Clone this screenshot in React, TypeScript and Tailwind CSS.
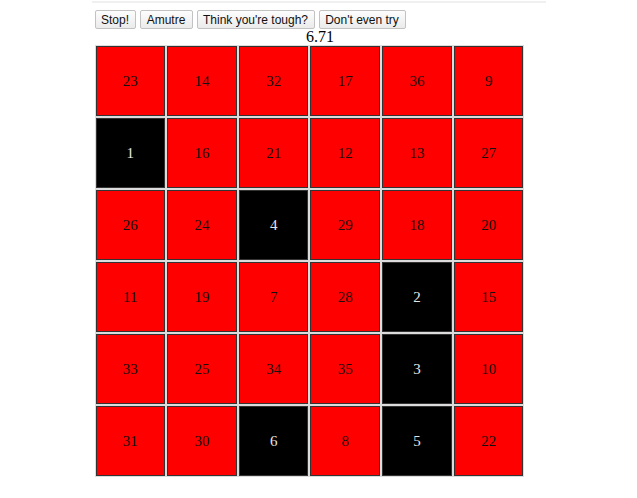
const CELLS: number[][] = [
  [23, 14, 32, 17, 36, 9],
  [1, 16, 21, 12, 13, 27],
  [26, 24, 4, 29, 18, 20],
  [11, 19, 7, 28, 2, 15],
  [33, 25, 34, 35, 3, 10],
  [31, 30, 6, 8, 5, 22],
];

// numbers already hit are painted black
const DONE = new Set([1, 2, 3, 4, 5, 6]);

const BUTTONS = [
  { label: "Stop!", w: "w-[41px]" },
  { label: "Amutre", w: "w-[53px]" },
  { label: "Think you're tough?", w: "w-[118px]" },
  { label: "Don't even try", w: "w-[87px]" },
];

export default function App() {
  return (
    <div className="min-h-[498px] w-full bg-white">
      <div className="mx-auto mt-px w-[454px] border-t-2 border-[#f0f0f0] pl-[3px]">
        <div className="flex gap-[4px] pt-[7px]">
          {BUTTONS.map((b) => (
            <button
              key={b.label}
              type="button"
              className={`${b.w} h-[19px] rounded-[2px] border border-[#c2c2c2] bg-gradient-to-b from-[#fdfdfd] to-[#ebebeb] text-[12px] leading-none text-[#111] [font-family:'Liberation_Sans',Arial,sans-serif]`}
            >
              {b.label}
            </button>
          ))}
        </div>
        <div className="h-[17px] text-center text-[16px] leading-[16px] text-black [font-family:'Liberation_Serif','Times_New_Roman',serif]">
          6.71
        </div>
        <div className="ml-px grid w-[428px] grid-cols-6 gap-[2px]">
          {CELLS.flat().map((n) => {
            const done = DONE.has(n);
            return (
              <div
                key={n}
                className={`flex h-[70px] items-center justify-center border border-[#333] text-[15px] shadow-[0_0_0_1px_#dcdcdc] [font-family:'Liberation_Serif','Times_New_Roman',serif] ${
                  done ? "bg-black text-[#e6e6e6]" : "bg-[#ff0000] text-[#111]"
                }`}
              >
                {n}
              </div>
            );
          })}
        </div>
      </div>
    </div>
  );
}
